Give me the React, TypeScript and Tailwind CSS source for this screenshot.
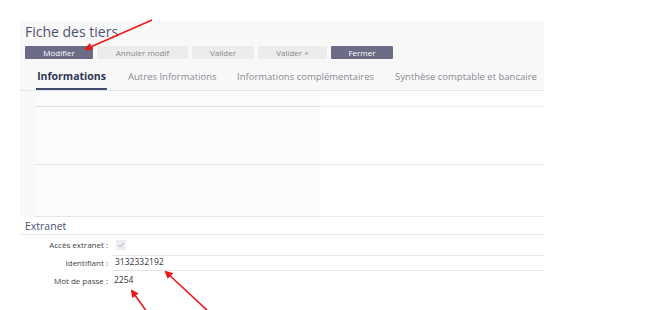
const font = { fontFamily: '"Open Sans", "Liberation Sans", sans-serif' };

function Btn({ label, dark, w }: { label: string; dark?: boolean; w: string }) {
  return (
    <div
      className={`${w} h-[13px] flex items-center justify-center text-[8px] leading-none rounded-[1px] ${
        dark ? "bg-[#6c6c86] text-white" : "bg-[#ececec] text-[#8a8a8a]"
      }`}
    >
      {label}
    </div>
  );
}

function Arrows() {
  return (
    <svg className="absolute inset-0 pointer-events-none" width="647" height="310">
      <defs>
        <marker id="ah" markerWidth="8" markerHeight="8" refX="6" refY="4" orient="auto" markerUnits="userSpaceOnUse">
          <path d="M0,0 L8,4 L0,8 Z" fill="#f01818" />
        </marker>
      </defs>
      <g stroke="#f01818" strokeWidth="1.6" fill="none">
        <line x1="152" y1="20" x2="86" y2="49" markerEnd="url(#ah)" />
        <line x1="147" y1="312" x2="132" y2="291" markerEnd="url(#ah)" />
        <line x1="209" y1="312" x2="166" y2="272" markerEnd="url(#ah)" />
      </g>
    </svg>
  );
}

export default function App() {
  return (
    <div className="relative w-[647px] h-[310px] bg-white overflow-hidden" style={font}>
      <div className="ml-[20px] mt-[21px] w-[524px]">
        <div className="bg-[#f8f8f9] border-b border-[#e6e6ea]">
          <div className="px-[5px] pt-[1px] text-[14px] leading-[20px] text-[#51516e]">Fiche des tiers</div>
          <div className="flex gap-[4px] pl-[5px] mt-[4px]">
            <Btn label="Modifier" dark w="w-[68px]" />
            <Btn label="Annuler modif" w="w-[91px]" />
            <Btn label="Valider" w="w-[62px]" />
            <Btn label="Valider +" w="w-[69px]" />
            <Btn label="Fermer" dark w="w-[62px]" />
          </div>
          <div className="flex gap-[21px] pl-[16px] mt-[11px] text-[9.5px] leading-none whitespace-nowrap">
            <div className="w-[71px] text-center text-[10.5px] font-bold text-[#2e3656] pt-[1px] pb-[6px] border-b-2 border-[#3f4a6e]">Informations</div>
            <div className="w-[88px] text-center text-[#8a8a92] pt-[2px]">Autres Informations</div>
            <div className="w-[137px] text-center text-[#8a8a92] pt-[2px]">Informations complémentaires</div>
            <div className="w-[142px] text-center text-[#8a8a92] pt-[2px]">Synthèse comptable et bancaire</div>
          </div>
        </div>
        <div className="flex h-[126px]">
          <div className="w-[15px] bg-[#f8f8f9]" />
          <div className="w-[285px] bg-[#fbfbfc] flex flex-col">
            <div className="h-[16px] border-b border-[#dcdce2]" />
            <div className="h-[58px] border-b border-[#e4e4ea]" />
            <div className="flex-1 border-b border-[#e4e4ea]" />
          </div>
          <div className="flex-1 bg-white flex flex-col">
            <div className="h-[16px] border-b border-[#ececf0]" />
            <div className="h-[58px] border-b border-[#ececf0]" />
            <div className="flex-1 border-b border-[#ececf0]" />
          </div>
        </div>
        <div className="px-[5px] pt-[2px] pb-[1px] text-[10.5px] leading-[14px] text-[#4a5072] border-b border-[#e8e8ec]">Extranet</div>
        <div className="text-[8px] text-[#444]">
          <div className="flex items-center h-[20px]">
            <div className="w-[88px] text-right">Accès extranet :</div>
            <div className="ml-[8px] w-[10px] h-[10px] bg-[#eeeef2] flex items-center justify-center">
              <svg width="8" height="8" viewBox="0 0 8 8">
                <path d="M1.5 4.2 L3.2 5.8 L6.5 2.2" stroke="#a8aac0" strokeWidth="1" fill="none" />
              </svg>
            </div>
          </div>
          <div className="flex items-center h-[16px]">
            <div className="w-[88px] text-right">Identifiant :</div>
            <div className="ml-[4px] flex-1 h-[16px] border-y border-[#e6e6ea] pl-[3px] flex items-center text-[8.5px] text-[#333]">3132332192</div>
          </div>
          <div className="flex items-center h-[20px]">
            <div className="w-[88px] text-right">Mot de passe :</div>
            <div className="ml-[6px] text-[8.5px] text-[#333]">2254</div>
          </div>
        </div>
      </div>
      <Arrows />
    </div>
  );
}
